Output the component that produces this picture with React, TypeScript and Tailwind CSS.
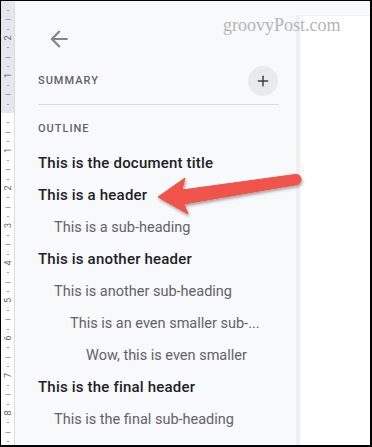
import { Plus } from "lucide-react";

const MARGIN = 112;
const STEP = 37.5;

function Ruler() {
  const ticks: { y: number; kind: "num" | "long" | "short"; n?: number }[] = [];
  for (let i = -12; i <= 36; i++) {
    const y = MARGIN + (i * STEP) / 4;
    if (y < 4 || y > 445) continue;
    const r = ((i % 4) + 4) % 4;
    if (i === 0) continue;
    if (r === 0) ticks.push({ y, kind: "num", n: Math.abs(i / 4) });
    else if (r === 2) ticks.push({ y, kind: "long" });
    else ticks.push({ y, kind: "short" });
  }
  return (
    <svg width="14" height="447" className="block shrink-0">
      <rect x="0" y="0" width="14" height={MARGIN} fill="#e4e8ed" />
      <rect x="0" y={MARGIN} width="14" height={447 - MARGIN} fill="#ffffff" />
      <line x1="13.5" y1="0" x2="13.5" y2="447" stroke="#dadce0" />
      {ticks.map((t, i) =>
        t.kind === "num" ? (
          <text
            key={i}
            x="7"
            y={t.y}
            fontSize="9"
            fill="#5f6368"
            fontFamily="Roboto, sans-serif"
            textAnchor="middle"
            dominantBaseline="central"
            transform={`rotate(-90 7 ${t.y})`}
          >
            {t.n}
          </text>
        ) : (
          <line
            key={i}
            x1={t.kind === "long" ? 4.5 : 6}
            x2={t.kind === "long" ? 9.5 : 8}
            y1={Math.round(t.y) + 0.5}
            y2={Math.round(t.y) + 0.5}
            stroke="#9aa0a6"
          />
        )
      )}
    </svg>
  );
}

const ITEMS: { text: string; level: number }[] = [
  { text: "This is the document title", level: 0 },
  { text: "This is a header", level: 0 },
  { text: "This is a sub-heading", level: 1 },
  { text: "This is another header", level: 0 },
  { text: "This is another sub-heading", level: 1 },
  { text: "This is an even smaller sub-...", level: 2 },
  { text: "Wow, this is even smaller", level: 3 },
  { text: "This is the final header", level: 0 },
  { text: "This is the final sub-heading", level: 1 },
];

const INDENT = ["pl-0", "pl-4", "pl-8", "pl-12"];

function Sidebar() {
  return (
    <div className="flex w-[281px] shrink-0 flex-col bg-[#f8f9fa] pl-[23px] pr-[17px] font-['Roboto',sans-serif]">
      <div className="pl-[8px] pt-[25px]">
        <svg width="26" height="26" viewBox="0 0 24 24" fill="#80868b">
          <path d="M20 11H7.83l5.59-5.59L12 4l-8 8 8 8 1.41-1.41L7.83 13H20v-2z" />
        </svg>
      </div>
      <div className="mt-[14px] flex h-[30px] items-center justify-between">
        <span className="text-[11px] font-medium tracking-[1px] text-[#5f6368]">SUMMARY</span>
        <button className="mr-[1px] flex h-[30px] w-[30px] items-center justify-center rounded-full bg-[#e8eaed] text-[#3c4043]">
          <Plus size={16} strokeWidth={2.2} />
        </button>
      </div>
      <div className="mt-[8px] h-px bg-[#dadce0]" />
      <div className="mt-[16px] text-[11px] font-medium tracking-[1px] text-[#5f6368]">OUTLINE</div>
      <ul className="mt-[10px] flex flex-col">
        {ITEMS.map((it) => (
          <li
            key={it.text}
            className={`flex h-[32px] items-center whitespace-nowrap ${INDENT[it.level]} ${
              it.level === 0
                ? "text-[15px] font-medium tracking-[0.2px] text-[#202124]"
                : "text-[14.5px] text-[#5f6368]"
            }`}
          >
            {it.text}
          </li>
        ))}
      </ul>
    </div>
  );
}

function RedArrow() {
  return (
    <svg className="pointer-events-none absolute inset-0" width="372" height="447">
      <defs>
        <filter id="sh" x="-20%" y="-50%" width="140%" height="200%">
          <feDropShadow dx="1" dy="2" stdDeviation="1.5" floodColor="#000" floodOpacity="0.35" />
        </filter>
      </defs>
      <g filter="url(#sh)" fill="#f0524a">
        <path d="M157 196 L184 177 L181 189 L294 173.5 A5 5 0 0 1 296 183.5 L183 203 L187 213 Z" strokeLinejoin="round" stroke="#f0524a" strokeWidth="1" />
      </g>
    </svg>
  );
}

export default function App() {
  return (
    <div className="relative flex h-[447px] w-[372px] overflow-hidden border-b-2 border-l border-r-2 border-t border-black bg-[#f8f9fa]">
      <Ruler />
      <Sidebar />
      <div className="flex flex-1 flex-col bg-[#f8f9fa]">
        <div className="h-[14px]" />
        <div className="flex-1 border-l-[4px] border-t border-[#eef0f2] bg-white" />
      </div>
      <span className="pointer-events-none absolute left-[222px] top-[13px] font-['Liberation_Serif',serif] text-[18px] leading-[22px] text-[#b5b5b5]">
        groovyPost.com
      </span>
      <RedArrow />
    </div>
  );
}
